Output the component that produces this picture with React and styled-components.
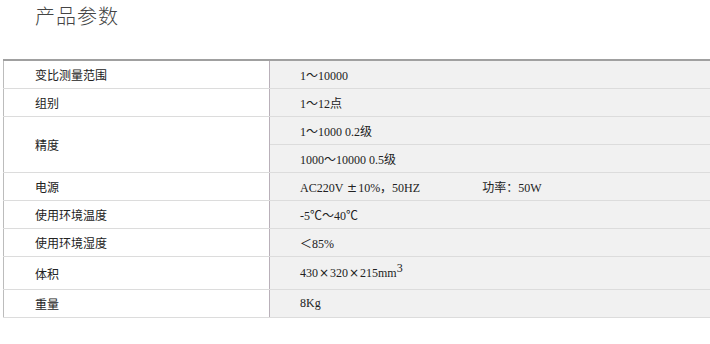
import React from 'react';
import styled, { createGlobalStyle } from 'styled-components';

const GlobalStyle = createGlobalStyle`
	body {
		margin: 0;
		background: #fff;
		overflow: hidden;
		font-family: "Noto Sans CJK SC", sans-serif;
	}
`;

const rows = [
	{ name: '变比测量范围', values: ['1～10000'] },
	{ name: '组别', values: ['1～12点'] },
	{ name: '精度', values: ['1～1000 0.2级', '1000～10000 0.5级'] },
	{ name: '电源', values: ['power'] },
	{ name: '使用环境温度', values: ['-5℃～40℃'] },
	{ name: '使用环境湿度', values: ['＜85%'] },
	{ name: '体积', values: ['volume'], tall: true },
	{ name: '重量', values: ['8Kg'] },
];

const renderValue = (v) => {
	if (v === 'power') {
		return (
			<>
				<span>AC220V <Wide>±</Wide>10%，50HZ</span>
				<Power>功率：50W</Power>
			</>
		);
	}
	if (v === 'volume') {
		return (
			<>
				430<Wide>×</Wide>320<Wide>×</Wide>215mm<Sup>3</Sup>
			</>
		);
	}
	return v;
};

export const App = () => {
	return (
		<Page>
			<GlobalStyle />
			<Title>产品参数</Title>
			<Table>
				<tbody>
					{rows.map((row) =>
						row.values.map((v, i) => (
							<tr key={row.name + i}>
								{i === 0 && (
									<NameCell rowSpan={row.values.length} $tall={row.tall}>
										{row.name}
									</NameCell>
								)}
								<ValueCell $tall={row.tall}>{renderValue(v)}</ValueCell>
							</tr>
						))
					)}
				</tbody>
			</Table>
		</Page>
	);
};

export default App;

const Page = styled.div`
	width: 710px;
	height: 344px;
	overflow: hidden;
`;

const Title = styled.h2`
	margin: 0;
	padding-left: 35px;
	height: 32px;
	line-height: 32px;
	font-size: 20px;
	font-weight: 300;
	color: #444;
	letter-spacing: 1px;
`;

const Table = styled.table`
	margin: 27px 0 0 3px;
	width: 730px;
	border-collapse: collapse;
	border-top: 2px solid #a0a0a0;
	border-left: 1px solid #bcbcbc;
	font-size: 12px;
	color: #222;
`;

const NameCell = styled.td`
	width: 234px;
	padding: 0 0 0 31px;
	background: #fff;
	border-bottom: 1px solid #dcdcdc;
	border-right: 1px solid #b9b0b9;
	font-family: "Noto Sans CJK SC", sans-serif;
	font-size: 12px;
	color: #222;
`;

const ValueCell = styled.td`
	height: ${(p) => (p.$tall ? '32px' : '27px')};
	padding: 0 0 0 30px;
	background: #f1f1f1;
	border-bottom: 1px solid #dcdcdc;
	font-family: "Liberation Serif", "Noto Sans CJK SC", serif;
	font-size: 12px;
	color: #222;
	white-space: pre;
	vertical-align: middle;
`;

const Wide = styled.span`
	display: inline-block;
	width: 12px;
	text-align: center;
	font-family: "DejaVu Sans", sans-serif;
	font-size: 12px;
	line-height: 1;
`;

const Power = styled.span`
	margin-left: 62px;
`;

const Sup = styled.sup`
	font-size: 12px;
	line-height: 0;
`;
